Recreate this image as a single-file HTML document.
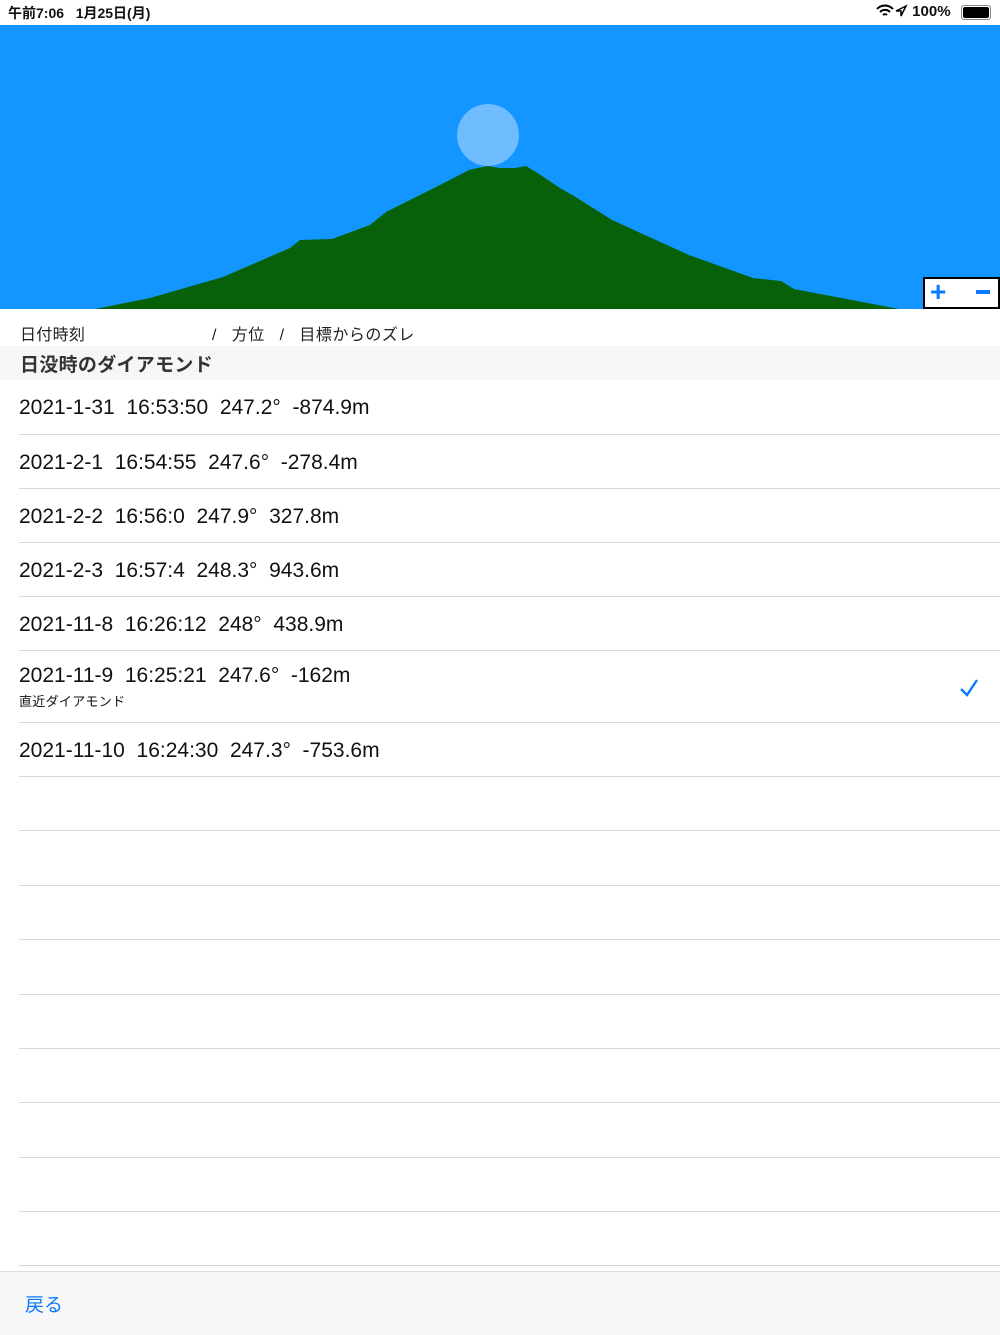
<!DOCTYPE html>
<html><head><meta charset="utf-8"><style>
body{margin:0;width:1000px;height:1334px;position:relative;background:#fff;font-family:"Liberation Sans","Noto Sans CJK JP",sans-serif;overflow:hidden;color:#111}
.a{position:absolute}
.row{position:absolute;left:19px;right:0;border-bottom:1px solid #d8d8d8;font-size:21px}
</style></head><body>
<div class="a" style="left:8px;top:3px;font-size:14px;font-weight:bold">午前7:06&nbsp;&nbsp;&nbsp;1月25日(月)</div>
<div class="a" style="left:876px;top:3px;font-size:15px;font-weight:bold">
<svg width="18" height="14" viewBox="0 0 18 14" style="vertical-align:-2px"><path d="M1 5a11 11 0 0 1 16 0M4 8a7 7 0 0 1 10 0M7 11a3 3 0 0 1 4 0" stroke="#000" stroke-width="2" fill="none"/></svg><svg width="14" height="14" viewBox="0 0 14 14" style="vertical-align:-2px"><path d="M12 2L2 7h5v5z" stroke="#000" stroke-width="1.5" fill="none"/></svg> 100%</div>
<div class="a" style="left:961px;top:5px;width:28px;height:13px;border:1px solid #888;border-radius:3px"><div style="margin:1px;height:11px;background:#000;border-radius:2px"></div></div>
<div class="a" style="left:0;top:25px;width:1000px;height:284px;background:#1396ff"></div>
<svg class="a" style="left:0;top:0" width="1000" height="310">
<circle cx="488" cy="135" r="31" fill="#6fbcff"/>
<polygon fill="#076108" points="95,309 150,298 223,277 290,248 300,240 332,239 351,232 370,225 386,212 440,185 469,170 478,168 488,166 500,168 515,168 526,166 539,174 560,188 574,196 612,220 689,255 753,278 781,281 794,289 899,309"/>
</svg>
<div class="a" style="left:923px;top:277px;width:73px;height:28px;border:2px solid #000;background:#fff"></div>
<div class="a" style="left:930px;top:276px;font-size:28px;color:#0a7aff;font-weight:bold">+</div>
<div class="a" style="left:976px;top:290px;width:14px;height:4px;background:#0a7aff"></div>
<div class="a" style="left:20px;top:321px;font-size:16px;color:#222;letter-spacing:0.3px">日付時刻</div>
<div class="a" style="left:212px;top:321px;font-size:16px;color:#222;letter-spacing:0.5px">/&nbsp;&nbsp;&nbsp;方位&nbsp;&nbsp;&nbsp;/&nbsp;&nbsp;&nbsp;目標からのズレ</div>
<div class="a" style="left:0;top:346px;width:1000px;height:34px;background:#f6f6f6"></div>
<div class="a" style="left:20px;top:350px;font-size:19px;font-weight:bold;color:#333;letter-spacing:0.3px">日没時のダイアモンド</div>
<div class="row" style="top:380px;height:54px"><div style="padding-top:16px">2021-1-31&nbsp;&nbsp;16:53:50&nbsp;&nbsp;247.2°&nbsp;&nbsp;-874.9m</div></div>
<div class="row" style="top:435px;height:53px"><div style="padding-top:16px">2021-2-1&nbsp;&nbsp;16:54:55&nbsp;&nbsp;247.6°&nbsp;&nbsp;-278.4m</div></div>
<div class="row" style="top:489px;height:53px"><div style="padding-top:16px">2021-2-2&nbsp;&nbsp;16:56:0&nbsp;&nbsp;247.9°&nbsp;&nbsp;327.8m</div></div>
<div class="row" style="top:543px;height:53px"><div style="padding-top:16px">2021-2-3&nbsp;&nbsp;16:57:4&nbsp;&nbsp;248.3°&nbsp;&nbsp;943.6m</div></div>
<div class="row" style="top:597px;height:53px"><div style="padding-top:16px">2021-11-8&nbsp;&nbsp;16:26:12&nbsp;&nbsp;248°&nbsp;&nbsp;438.9m</div></div>
<div class="row" style="top:651px;height:71px"><div style="padding-top:13px">2021-11-9&nbsp;&nbsp;16:25:21&nbsp;&nbsp;247.6°&nbsp;&nbsp;-162m</div><div style="font-size:13px;margin-top:3px;letter-spacing:0.3px">直近ダイアモンド</div>
<svg class="a" style="left:940px;top:27px" width="20" height="20" viewBox="0 0 20 20"><path d="M2 11l6 6L18 2" stroke="#0a7aff" stroke-width="2.4" fill="none"/></svg></div>
<div class="row" style="top:723px;height:53px"><div style="padding-top:16px">2021-11-10&nbsp;&nbsp;16:24:30&nbsp;&nbsp;247.3°&nbsp;&nbsp;-753.6m</div></div>
<div class="row" style="top:777px;height:53px"></div>
<div class="row" style="top:831px;height:54px"></div>
<div class="row" style="top:886px;height:53px"></div>
<div class="row" style="top:940px;height:54px"></div>
<div class="row" style="top:995px;height:53px"></div>
<div class="row" style="top:1049px;height:53px"></div>
<div class="row" style="top:1103px;height:54px"></div>
<div class="row" style="top:1158px;height:53px"></div>
<div class="row" style="top:1212px;height:53px"></div>
<div class="a" style="left:0;top:1271px;width:1000px;height:63px;background:#f8f8f8;border-top:1px solid #ddd"></div>
<div class="a" style="left:25px;top:1290px;font-size:19px;color:#0a7aff">戻る</div>
</body></html>
